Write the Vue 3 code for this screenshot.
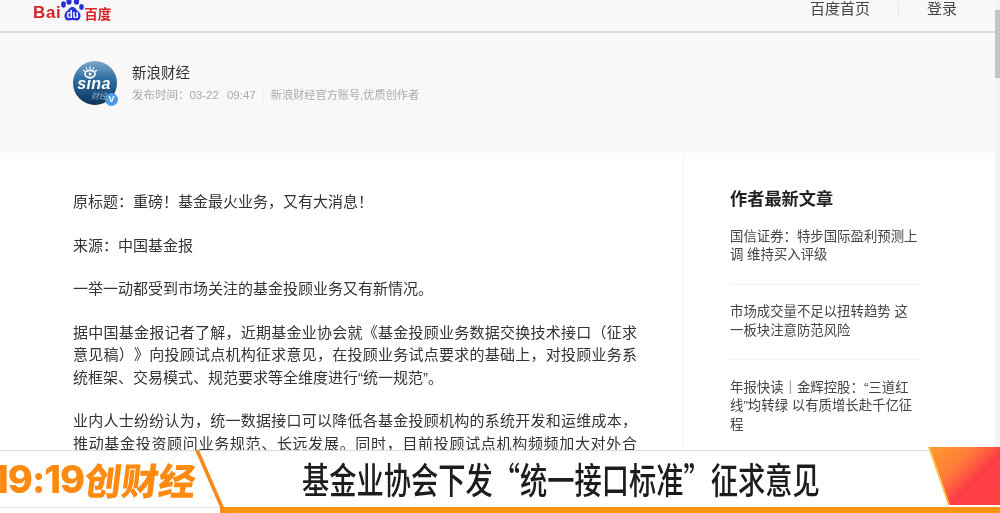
<script setup>
const paragraphs = [
  ['原标题：重磅！基金最火业务，又有大消息！'],
  ['来源：中国基金报'],
  ['一举一动都受到市场关注的基金投顾业务又有新情况。'],
  ['据中国基金报记者了解，近期基金业协会就《基金投顾业务数据交换技术接口（征求', '意见稿）》向投顾试点机构征求意见，在投顾业务试点要求的基础上，对投顾业务系', '统框架、交易模式、规范要求等全维度进行“统一规范”。'],
  ['业内人士纷纷认为，统一数据接口可以降低各基金投顾机构的系统开发和运维成本，', '推动基金投资顾问业务规范、长远发展。同时，目前投顾试点机构频频加大对外合']
]
const articles = [
  ['国信证券：特步国际盈利预测上', '调 维持买入评级'],
  ['市场成交量不足以扭转趋势 这', '一板块注意防范风险'],
  ['年报快读｜金辉控股：“三道红', '线”均转绿 以有质增长赴千亿征', '程']
]
</script>

<template>
  <div class="page">
    <header class="topbar">
      <div class="logo">
        <span class="bai">Bai</span>
        <svg class="paw" width="24" height="22" viewBox="0 0 24 22">
          <ellipse cx="3.500" cy="4.500" rx="2.400" ry="3.300" fill="#2932d5" />
          <ellipse cx="9" cy="1.500" rx="2.600" ry="3.300" fill="#2932d5" />
          <ellipse cx="16.500" cy="1.500" rx="2.600" ry="3.300" fill="#2932d5" />
          <ellipse cx="21.500" cy="7" rx="2.300" ry="3" fill="#2932d5" />
          <path d="M12.500 7c2.800 0 3.500 2.600 6 4.500 3 2.300 2.600 7.500-.5 8.800-2 .8-3.800-.3-5.500-.3s-3.500 1.100-5.500.3C4 19 3.500 14 6.500 11.500c2.500-2 3-4.500 6-4.500z" fill="#2932d5" />
          <text x="12.500" y="18" class="du">du</text>
        </svg>
        <span class="bai-cn">百度</span>
      </div>
      <nav class="nav">
        <span>百度首页</span>
        <i class="nav-sep"></i>
        <span>登录</span>
      </nav>
    </header>

    <section class="author">
      <div class="avatar">
        <svg width="44" height="44" viewBox="0 0 44 44">
          <defs>
            <linearGradient id="av" x1="0" y1="0" x2="0" y2="1">
              <stop offset="0" stop-color="#7fa6c6" />
              <stop offset="0.4" stop-color="#2f6fa4" />
              <stop offset="1" stop-color="#0c3458" />
            </linearGradient>
          </defs>
          <circle cx="22" cy="22" r="22" fill="url(#av)" />
          <ellipse cx="17" cy="13" rx="5" ry="3.600" fill="none" stroke="#fff" stroke-width="1.700" />
          <circle cx="17" cy="13" r="1.500" fill="#fff" />
          <path d="M10 9l2 1.500M13 6.500l1 2M17 5.500v2.500M21 6.500l-1 2M24 9l-2 1.500" stroke="#fff" stroke-width="1.200" />
          <text x="21" y="28" class="sina">sina</text>
          <text x="18" y="38" class="cai">财经</text>
        </svg>
        <span class="vbadge">V</span>
      </div>
      <div class="author-text">
        <div class="author-name">新浪财经</div>
        <div class="author-meta">
          <span>发布时间：03-22</span>
          <span>09:47</span>
          <i class="meta-sep"></i>
          <span class="meta-bio">新浪财经官方账号,优质创作者</span>
        </div>
      </div>
    </section>

    <main class="content">
      <article class="article">
        <p v-for="(lines, i) in paragraphs" :key="i">
          <span v-for="line in lines" :key="line" class="line">{{ line }}</span>
        </p>
      </article>
      <aside class="sidebar">
        <h2>作者最新文章</h2>
        <div v-for="(lines, i) in articles" :key="i" class="side-item">
          <span v-for="line in lines" :key="line" class="line">{{ line }}</span>
        </div>
      </aside>
    </main>

    <div class="scrollbar"><div class="thumb"></div></div>

    <footer class="banner">
      <div class="banner-main">
        <div class="brand">
          <span class="clock">19:19</span>
          <span class="brand-cn">创财经</span>
        </div>
        <div class="slash"></div>
        <div class="headline">基金业协会下发“统一接口标准”征求意见</div>
        <div class="corner"></div>
      </div>
      <div class="banner-foot">
        <div class="foot-left"></div>
        <div class="foot-rule"></div>
      </div>
    </footer>
  </div>
</template>

<style>
html, body { margin: 0; overflow: hidden; }
</style>

<style scoped>
.page {
  position: relative;
  width: 1000px;
  height: 513px;
  overflow: hidden;
  background: #f8f8f8;
  font-family: "Liberation Sans", "Noto Sans CJK SC", sans-serif;
  text-spacing-trim: space-all;
  color: #333;
  filter: blur(0.45px);
}
.topbar {
  height: 33px;
  box-sizing: border-box;
  border-bottom: 2px solid #dcdcdc;
  display: flex;
  justify-content: space-between;
  padding: 0 43px 0 33px;
}
.logo { display: flex; align-items: flex-start; height: 24px; overflow: hidden; }
.bai {
  font: bold 17px/26px "Liberation Sans", sans-serif;
  color: #d8232a;
  letter-spacing: 0.6px;
}
.paw { margin-left: -1px; }
.du { font: bold 10px "Liberation Sans", sans-serif; fill: #fff; text-anchor: middle; }
.bai-cn { font: bold 13.500px/26px "Noto Sans CJK SC", sans-serif; color: #d8232a; }
.nav { display: flex; align-items: center; height: 17px; font-size: 15px; line-height: 17px; color: #444; }
.nav-sep { width: 1px; height: 14px; background: #e6e6e6; margin: 0 28px; }
.author {
  height: 120px;
  box-sizing: border-box;
  padding: 28px 0 0 73px;
  display: flex;
  gap: 15px;
}
.avatar { position: relative; width: 44px; height: 44px; }
.avatar svg { display: block; }
.sina { font: italic bold 16px "Liberation Sans", sans-serif; fill: #fff; text-anchor: middle; letter-spacing: .4px; }
.cai { font: italic 8px "Noto Sans CJK SC", sans-serif; fill: #8fabc2; }
.vbadge {
  position: absolute;
  right: -1px;
  bottom: -1px;
  width: 13px;
  height: 13px;
  border-radius: 50%;
  background: #4b9be8;
  color: #fff;
  font: bold 9px/13px "Liberation Sans", sans-serif;
  text-align: center;
}
.author-text { padding-top: 1px; }
.author-name { font-size: 14.500px; line-height: 22px; color: #333; }
.author-meta {
  display: flex;
  align-items: center;
  margin-top: 3px;
  font-size: 11.500px;
  line-height: 16px;
  color: #aaa;
}
.author-meta span:nth-child(2) { margin-left: 8px; }
.meta-sep { width: 1px; height: 14px; background: #eee; margin: 0 7px; }
.meta-bio { font-size: 11.200px; }
.content {
  height: 360px;
  display: flex;
  background: #fff;
}
.article {
  width: 684px;
  box-sizing: border-box;
  padding: 38px 0 0 73px;
  border-right: 1px solid #f2f2f2;
  font-size: 15px;
  line-height: 22.500px;
  color: #333;
}
.article p { margin: 0 0 21px; width: 564px; }
.line { display: block; white-space: nowrap; }
.article .line { white-space: normal; text-align: justify; text-align-last: justify; }
.article .line:last-child { text-align-last: left; }
.article p:last-child .line:last-child { text-align-last: justify; }
.sidebar { padding: 34px 0 0 46px; flex: 1; }
.sidebar h2 { margin: 0 0 16.500px; font-size: 17.200px; line-height: 24px; font-weight: 700; color: #222; }
.side-item {
  width: 190px;
  font-size: 13.400px;
  line-height: 18.500px;
  color: #444;
  padding-bottom: 19px;
  margin-bottom: 18.500px;
  border-bottom: 1px solid #f2f2f2;
}
.side-item:last-child { border-bottom: 0; }
.scrollbar {
  position: absolute;
  top: 0;
  right: 0;
  width: 5px;
  height: 450px;
  background: #f3f3f3;
}
.thumb { margin-top: 10px; height: 68px; background: #c4c4c4; }
.banner {
  position: absolute;
  left: 0;
  right: 0;
  bottom: 0;
  height: 63px;
  display: flex;
  flex-direction: column;
  background: #fff;
  border-top: 1px solid #d8dbe4;
  box-sizing: border-box;
}
.banner-main { position: relative; flex: 1; display: flex; align-items: center; }
.banner-foot { display: flex; height: 6px; }
.foot-left { width: 220px; border-top: 1px solid #e2e2e2; }
.foot-rule { flex: 1; background: #ff9410; }
.brand { margin-left: -8px; display: flex; align-items: center; color: #ff8a12; flex: none; }
.clock { font: 800 38px/44px Inter, "Liberation Sans", sans-serif; letter-spacing: -1px; }
.brand-cn {
  display: inline-block;
  margin-left: 1px;
  font: 900 37px/44px "Noto Sans CJK SC", sans-serif;
  transform: skewX(-7deg);
}
.slash {
  position: absolute;
  left: 195px;
  top: -1px;
  width: 4px;
  height: 63px;
  background: #f58a1f;
  transform: skewX(23.500deg);
  transform-origin: top left;
}
.headline {
  position: absolute;
  left: 302px;
  top: 4px;
  font-family: "Noto Sans CJK SC", sans-serif;
  font-size: 36px;
  font-weight: 500;
  line-height: 46px;
  color: #1d1d1d;
  white-space: nowrap;
  transform: scaleX(0.757);
  transform-origin: left center;
}
.corner {
  position: absolute;
  right: 0;
  top: -4px;
  width: 72px;
  height: 58px;
  clip-path: polygon(0 0, 100% 0, 100% 100%, 20px 100%);
  background: #ffc24a;
}
.corner::after {
  content: "";
  position: absolute;
  inset: 0 0 0 2px;
  clip-path: polygon(0 0, 100% 0, 100% 100%, 20px 100%);
  background: linear-gradient(135deg, #ff9a2e 0%, #ff7d38 35%, #ff3d48 60%, #fd4040 100%);
}
</style>
